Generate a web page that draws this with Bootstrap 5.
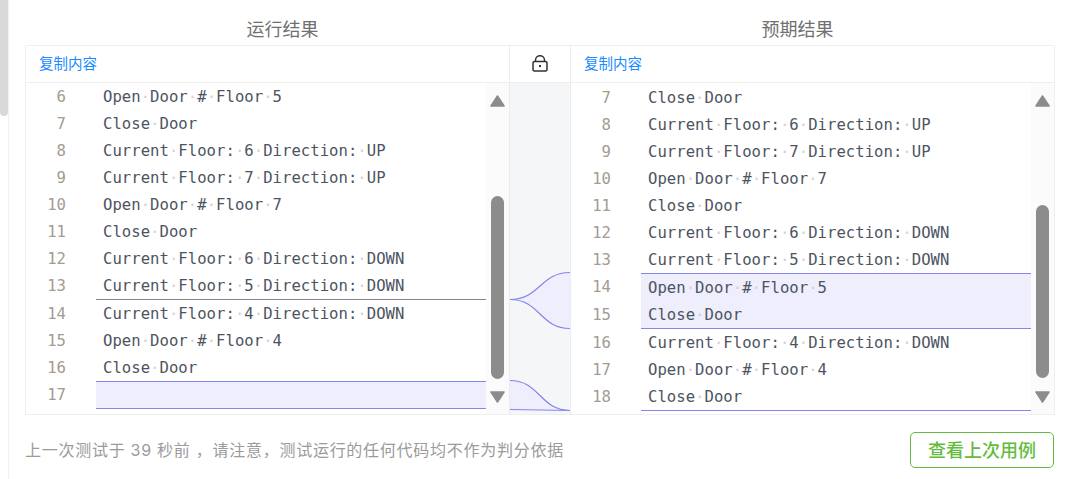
<!DOCTYPE html>
<html lang="zh">
<head>
<meta charset="utf-8">
<link href="https://cdn.jsdelivr.net/npm/bootstrap@5.3.0/dist/css/bootstrap.min.css" rel="stylesheet">
<style>
html,body{height:479px;overflow:hidden;background:#fff}
body{font-family:Inter,"Noto Sans CJK SC",sans-serif}
.page-rail{width:9px;flex:none;border-right:1px solid #f1f1f1}
.page-thumb{width:8px;height:116px;background:#d9d9d9;border-radius:0 0 4px 4px}
.page-main{width:1030px;margin-left:16px}
.pane-title{height:45px;line-height:56px;font-size:18px;color:#707070;font-family:"Noto Sans CJK SC",sans-serif}
.diff-box{height:370px;border:1px solid #efefef}
.side-l,.side-r{width:483px;flex:none}
.gutter{width:62px;flex:none;border-left:1px solid #ebebeb;border-right:1px solid #ebebeb}
.head-row{height:37px;border-bottom:1px solid #efefef}
.copy-link{font-size:14.5px;color:#1a8cff;text-decoration:none;font-family:"Noto Sans CJK SC",sans-serif;padding-left:13px;padding-bottom:2px}
.lock-ico{margin-bottom:2px}
.code-area{height:331px;overflow:hidden}
.code-lines{width:460px;flex:none}
.code-row{height:27px;display:flex;font:15.6px/29px "DejaVu Sans Mono",monospace;letter-spacing:.03px;color:#4d5461;white-space:pre}
.ln{width:40px;flex:none;text-align:right;color:#a19c94}
.tx{margin-left:30px;padding-left:7px;flex:1}
.ws{color:#cfd2d6}
.rule-bottom .tx{border-bottom:1px solid #8585ea}
.code-row.rule-bottom{height:28px}
.rule-top .tx{border-top:1px solid #8585ea}
.code-row.rule-top{height:28px}
.code-row.grey-bottom{height:28px}
.grey-bottom .tx{border-bottom:1px solid #85858f}
.hl .tx{background:#eeeefc}
.pad-right{padding-top:1px}
.sbar{width:23px;flex:none;background:#fbfbfb;position:relative}
.sbar-thumb{position:absolute;left:5px;width:13px;background:#8c8c8c;border-radius:7px}
.thumb-l{top:113px;height:183px}
.thumb-r{top:122px;height:173px}
.arr{position:absolute;left:4px;width:15px;height:12px}
.arr-up{top:12px}
.arr-dn{top:308px}
.gutter-body{display:block;width:60px;height:331px;background:#f5f6f8}
.foot-row{height:70px}
.foot-note{font-size:16px;letter-spacing:.73px;color:#9b9b9b;white-space:pre}
.btn-case{width:144px;height:36px;padding:0 0 1px;font-size:18px;line-height:33px;font-weight:500;color:#62bd3c;border:1px solid #62bd3c;border-radius:5px;background:#fff;margin-right:1px;font-family:"Noto Sans CJK SC",sans-serif}
.btn-case:hover{color:#62bd3c;border-color:#62bd3c;background:#fff}
</style>
</head>
<body class="d-flex m-0">
<div class="page-rail"><div class="page-thumb"></div></div>
<main class="page-main">
  <div class="row g-0">
    <div class="col-6 text-center pane-title">运行结果</div>
    <div class="col-6 text-center pane-title">预期结果</div>
  </div>
  <div class="diff-box d-flex">
    <section class="side-l">
      <div class="head-row d-flex align-items-center"><a class="copy-link" href="#">复制内容</a></div>
      <div class="code-area d-flex">
        <div class="code-lines">
          <div class="code-row"><span class="ln">6</span><span class="tx">Open<span class="ws">·</span>Door<span class="ws">·</span>#<span class="ws">·</span>Floor<span class="ws">·</span>5</span></div>
          <div class="code-row"><span class="ln">7</span><span class="tx">Close<span class="ws">·</span>Door</span></div>
          <div class="code-row"><span class="ln">8</span><span class="tx">Current<span class="ws">·</span>Floor:<span class="ws">·</span>6<span class="ws">·</span>Direction:<span class="ws">·</span>UP</span></div>
          <div class="code-row"><span class="ln">9</span><span class="tx">Current<span class="ws">·</span>Floor:<span class="ws">·</span>7<span class="ws">·</span>Direction:<span class="ws">·</span>UP</span></div>
          <div class="code-row"><span class="ln">10</span><span class="tx">Open<span class="ws">·</span>Door<span class="ws">·</span>#<span class="ws">·</span>Floor<span class="ws">·</span>7</span></div>
          <div class="code-row"><span class="ln">11</span><span class="tx">Close<span class="ws">·</span>Door</span></div>
          <div class="code-row"><span class="ln">12</span><span class="tx">Current<span class="ws">·</span>Floor:<span class="ws">·</span>6<span class="ws">·</span>Direction:<span class="ws">·</span>DOWN</span></div>
          <div class="code-row grey-bottom"><span class="ln">13</span><span class="tx">Current<span class="ws">·</span>Floor:<span class="ws">·</span>5<span class="ws">·</span>Direction:<span class="ws">·</span>DOWN</span></div>
          <div class="code-row"><span class="ln">14</span><span class="tx">Current<span class="ws">·</span>Floor:<span class="ws">·</span>4<span class="ws">·</span>Direction:<span class="ws">·</span>DOWN</span></div>
          <div class="code-row"><span class="ln">15</span><span class="tx">Open<span class="ws">·</span>Door<span class="ws">·</span>#<span class="ws">·</span>Floor<span class="ws">·</span>4</span></div>
          <div class="code-row"><span class="ln">16</span><span class="tx">Close<span class="ws">·</span>Door</span></div>
          <div class="code-row hl rule-top rule-bottom"><span class="ln">17</span><span class="tx"></span></div>
        </div>
        <div class="sbar">
          <svg class="arr arr-up" viewBox="0 0 15 12"><path d="M7.5 1 L14 11 H1 Z" fill="#8c8c8c" stroke="#8c8c8c" stroke-width="1.6" stroke-linejoin="round"/></svg>
          <div class="sbar-thumb thumb-l"></div>
          <svg class="arr arr-dn" viewBox="0 0 15 12"><path d="M1 1 H14 L7.5 11 Z" fill="#8c8c8c" stroke="#8c8c8c" stroke-width="1.6" stroke-linejoin="round"/></svg>
        </div>
      </div>
    </section>
    <div class="gutter">
      <div class="head-row d-flex align-items-center justify-content-center">
        <svg class="lock-ico" width="16" height="17" viewBox="0 0 16 17" fill="none" stroke="#333" stroke-width="1.5"><rect x="1" y="6.5" width="14" height="9.5" rx="1.5"/><path d="M3.5 6.5V5a4.5 4.3 0 0 1 9 0v1.5"/><path d="M8 10v2" stroke-width="2"/></svg>
      </div>
      <svg class="gutter-body" viewBox="0 0 60 331">
        <path d="M0 216.5C30 216.5 30 189.5 60 189.5V245.5C30 245.5 30 216.5 0 216.5Z" fill="#eeeefc"/>
        <path d="M0 216.5C30 216.5 30 189.5 60 189.5M0 216.5C30 216.5 30 245.5 60 245.5" fill="none" stroke="#8585ea" stroke-width="1.2"/>
        <path d="M0 297.5C30 297.5 30 327.5 60 327.5L0 326.5Z" fill="#eeeefc"/>
        <path d="M0 297.5C30 297.5 30 327.5 60 327.5M0 326.5L60 327.5" fill="none" stroke="#8585ea" stroke-width="1.2"/>
      </svg>
    </div>
    <section class="side-r">
      <div class="head-row d-flex align-items-center"><a class="copy-link" href="#">复制内容</a></div>
      <div class="code-area d-flex">
        <div class="code-lines pad-right">
          <div class="code-row"><span class="ln">7</span><span class="tx">Close<span class="ws">·</span>Door</span></div>
          <div class="code-row"><span class="ln">8</span><span class="tx">Current<span class="ws">·</span>Floor:<span class="ws">·</span>6<span class="ws">·</span>Direction:<span class="ws">·</span>UP</span></div>
          <div class="code-row"><span class="ln">9</span><span class="tx">Current<span class="ws">·</span>Floor:<span class="ws">·</span>7<span class="ws">·</span>Direction:<span class="ws">·</span>UP</span></div>
          <div class="code-row"><span class="ln">10</span><span class="tx">Open<span class="ws">·</span>Door<span class="ws">·</span>#<span class="ws">·</span>Floor<span class="ws">·</span>7</span></div>
          <div class="code-row"><span class="ln">11</span><span class="tx">Close<span class="ws">·</span>Door</span></div>
          <div class="code-row"><span class="ln">12</span><span class="tx">Current<span class="ws">·</span>Floor:<span class="ws">·</span>6<span class="ws">·</span>Direction:<span class="ws">·</span>DOWN</span></div>
          <div class="code-row"><span class="ln">13</span><span class="tx">Current<span class="ws">·</span>Floor:<span class="ws">·</span>5<span class="ws">·</span>Direction:<span class="ws">·</span>DOWN</span></div>
          <div class="code-row hl rule-top"><span class="ln">14</span><span class="tx">Open<span class="ws">·</span>Door<span class="ws">·</span>#<span class="ws">·</span>Floor<span class="ws">·</span>5</span></div>
          <div class="code-row hl rule-bottom"><span class="ln">15</span><span class="tx">Close<span class="ws">·</span>Door</span></div>
          <div class="code-row"><span class="ln">16</span><span class="tx">Current<span class="ws">·</span>Floor:<span class="ws">·</span>4<span class="ws">·</span>Direction:<span class="ws">·</span>DOWN</span></div>
          <div class="code-row"><span class="ln">17</span><span class="tx">Open<span class="ws">·</span>Door<span class="ws">·</span>#<span class="ws">·</span>Floor<span class="ws">·</span>4</span></div>
          <div class="code-row rule-bottom"><span class="ln">18</span><span class="tx">Close<span class="ws">·</span>Door</span></div>
        </div>
        <div class="sbar">
          <svg class="arr arr-up" viewBox="0 0 15 12"><path d="M7.5 1 L14 11 H1 Z" fill="#8c8c8c" stroke="#8c8c8c" stroke-width="1.6" stroke-linejoin="round"/></svg>
          <div class="sbar-thumb thumb-r"></div>
          <svg class="arr arr-dn" viewBox="0 0 15 12"><path d="M1 1 H14 L7.5 11 Z" fill="#8c8c8c" stroke="#8c8c8c" stroke-width="1.6" stroke-linejoin="round"/></svg>
        </div>
      </div>
    </section>
  </div>
  <div class="foot-row d-flex align-items-center justify-content-between">
    <span class="foot-note">上一次测试于 39 秒前 ，请注意，测试运行的任何代码均不作为判分依据</span>
    <button type="button" class="btn btn-case">查看上次用例</button>
  </div>
</main>
<script src="https://cdn.jsdelivr.net/npm/bootstrap@5.3.0/dist/js/bootstrap.bundle.min.js"></script>
</body>
</html>
